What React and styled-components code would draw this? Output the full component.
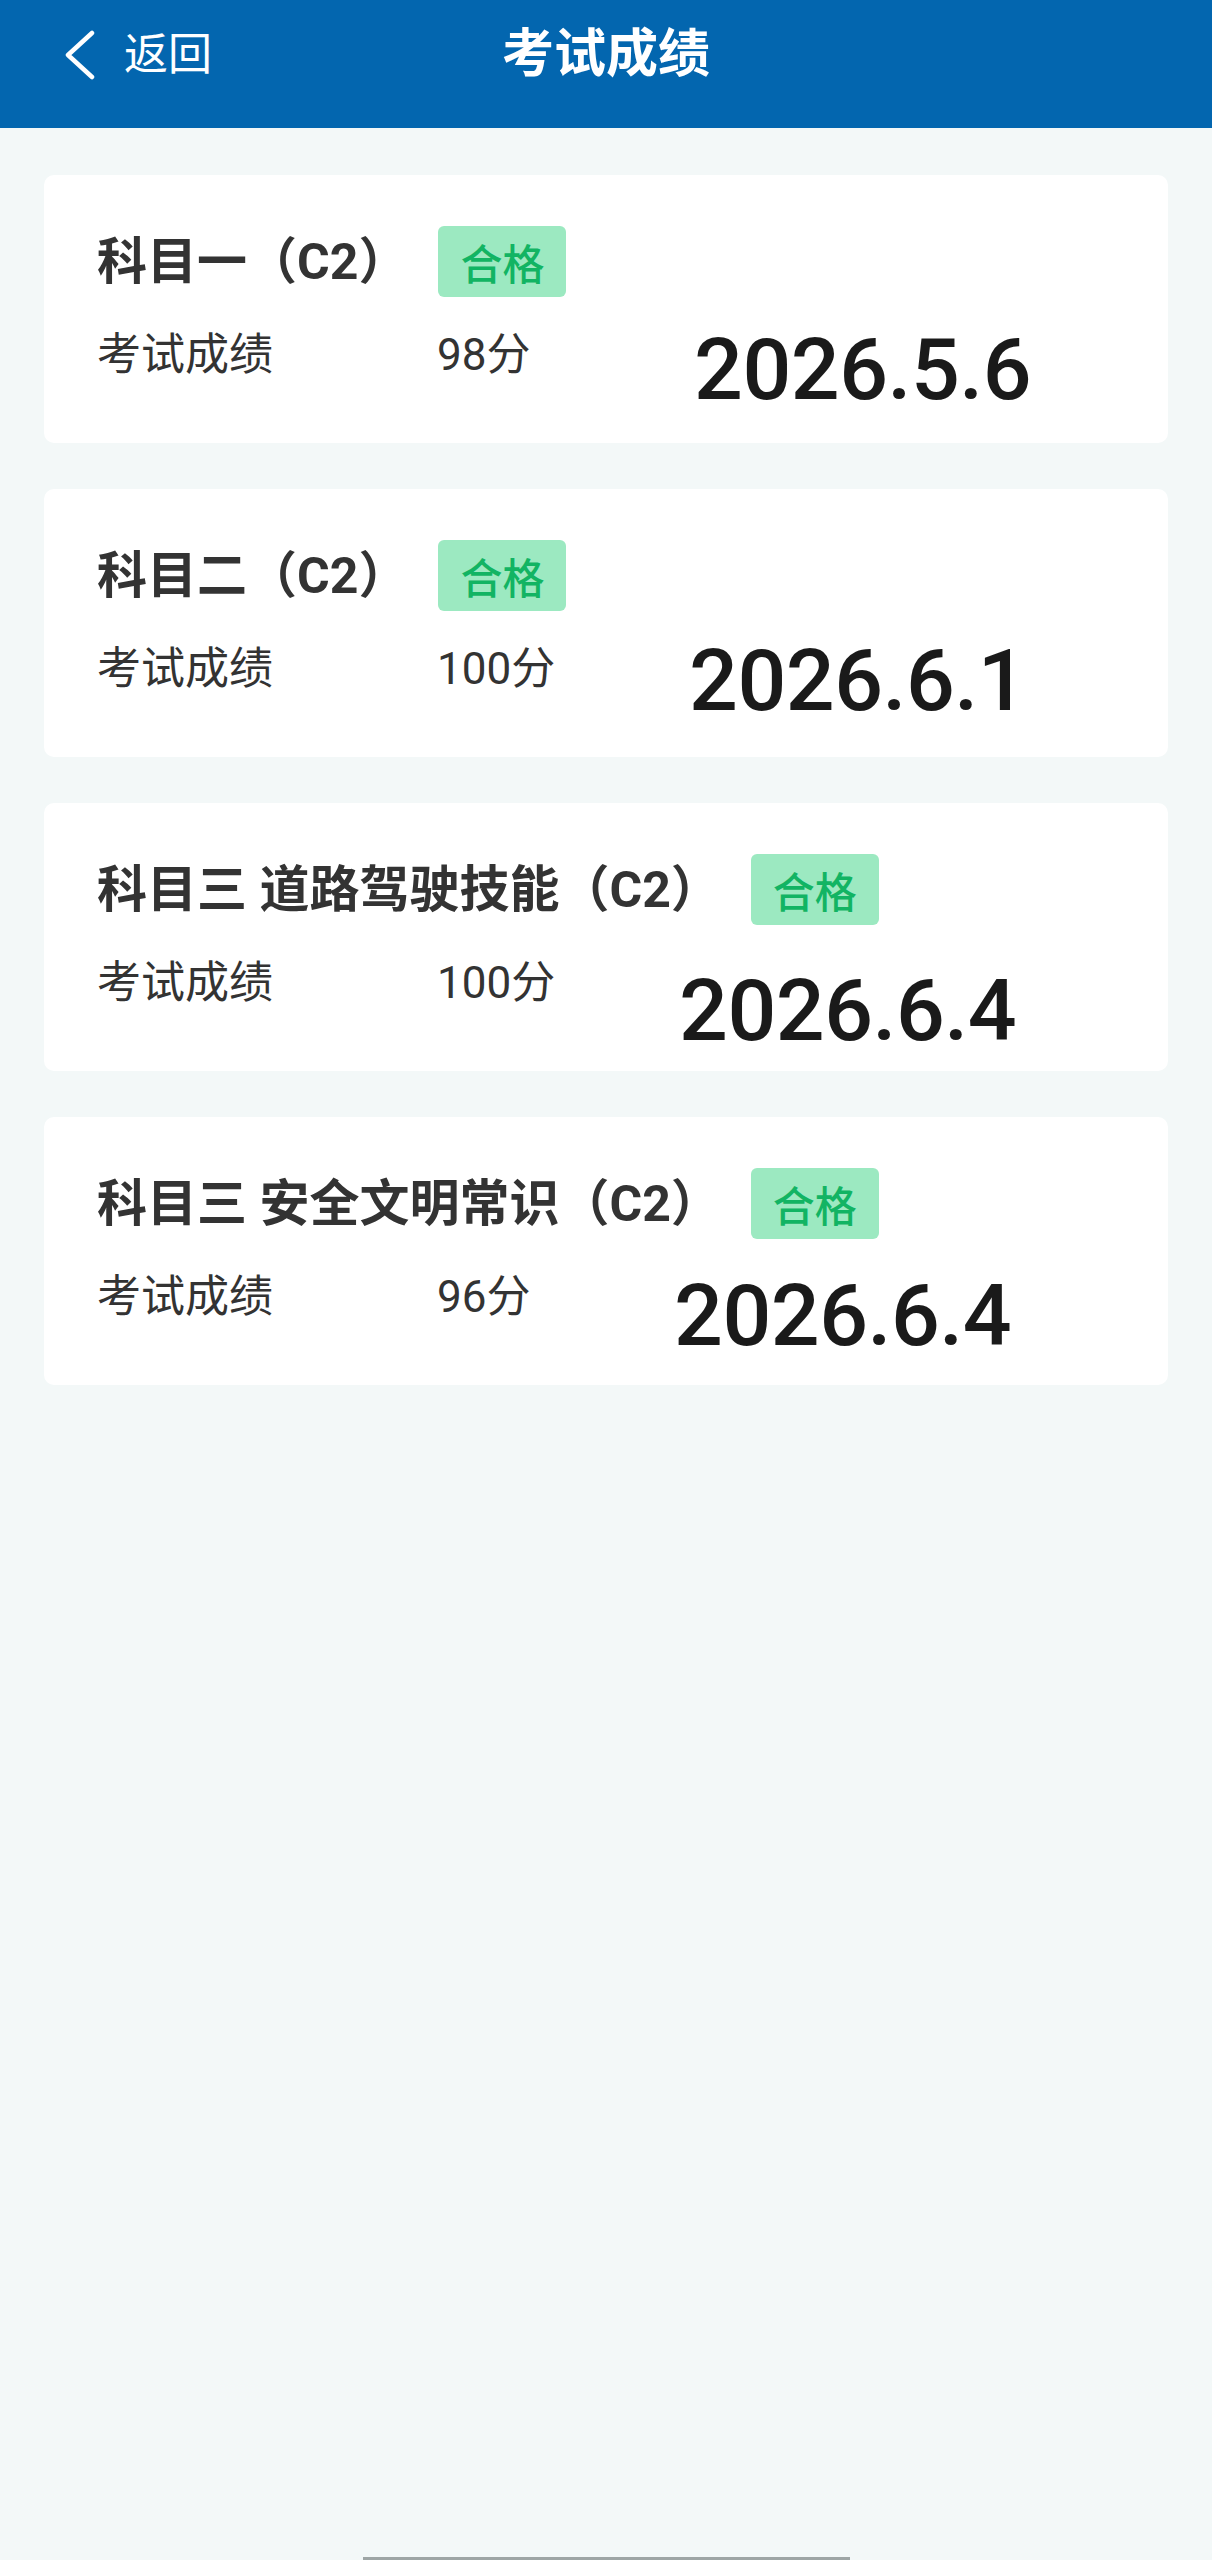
import React from 'react'
import styled, {createGlobalStyle} from "styled-components"

const GlobalStyle = createGlobalStyle`
    body {
        margin: 0;
        background: #f3f8f8;
        font-family: Roboto, "Noto Sans CJK SC", sans-serif;
    }
`
const Page = styled.div`
    display: flex;
    flex-direction: column;
    min-height: 2560px;
`
const Header = styled.div`
    display: grid;
    grid-template-columns: 1fr auto 1fr;
    align-items: center;
    height: 128px;
    padding-bottom: 18px;
    box-sizing: border-box;
    background: #0366af;
    color: #fff;
`
const Back = styled.div`
    display: flex;
    align-items: center;
    padding-left: 65px;
    font-size: 44px;
    line-height: 1;
    svg {
        margin-right: 29px;
    }
`
const Title = styled.div`
    font-size: 52px;
    font-weight: 700;
    line-height: 1;
`
const List = styled.div`
    display: flex;
    flex-direction: column;
    gap: 46px;
    padding: 47px 44px;
    flex: 1;
`
const Card = styled.div`
    height: 268px;
    box-sizing: border-box;
    padding: 51px 53px 0 53px;
    background: #fff;
    border-radius: 10px;
`
const TitleRow = styled.div`
    display: flex;
    align-items: center;
    height: 71px;
`
const Subject = styled.div`
    font-size: 50px;
    font-weight: 700;
    color: #333;
    line-height: 1;
    margin-right: 30px;
`
const Badge = styled.div`
    display: flex;
    align-items: center;
    justify-content: center;
    width: 128px;
    height: 71px;
    border-radius: 6px;
    background: #9ce9c1;
    color: #12b463;
    font-size: 42px;
    font-weight: 500;
`
const InfoRow = styled.div`
    display: flex;
    align-items: flex-start;
    margin-top: 28px;
`
const Label = styled.div`
    width: 340px;
    font-size: 44px;
    line-height: 60px;
    color: #333;
`
const Score = styled.div`
    width: ${props => props.$width}px;
    font-size: 44px;
    line-height: 60px;
    color: #333;
`
const DateText = styled.div`
    margin-top: ${props => props.$dy}px;
    font-size: 86px;
    font-weight: 500;
    line-height: 87px;
    letter-spacing: -0.5px;
    color: #1a1a1a;
`
const HomeBar = styled.div`
    width: 487px;
    height: 3px;
    margin: 0 auto;
    background: #9ea6a6;
`

const results = [
    {subject: "科目一（C2）", score: "98分", date: "2026.5.6", width: 257, dy: 1},
    {subject: "科目二（C2）", score: "100分", date: "2026.6.1", width: 252, dy: -2},
    {subject: "科目三 道路驾驶技能（C2）", score: "100分", date: "2026.6.4", width: 242, dy: 14},
    {subject: "科目三 安全文明常识（C2）", score: "96分", date: "2026.6.4", width: 237, dy: 5},
]

const App = () => {
    return (
        <Page>
            <GlobalStyle />
            <Header>
                <Back>
                    <svg width="30" height="50" viewBox="0 0 30 50">
                        <polyline points="27,3 3,25 27,47" fill="none" stroke="#fff" strokeWidth="4.5" strokeLinecap="round" strokeLinejoin="round" />
                    </svg>
                    返回
                </Back>
                <Title>考试成绩</Title>
                <div />
            </Header>
            <List>
                {results.map(r => (
                    <Card key={r.subject}>
                        <TitleRow>
                            <Subject>{r.subject}</Subject>
                            <Badge>合格</Badge>
                        </TitleRow>
                        <InfoRow>
                            <Label>考试成绩</Label>
                            <Score $width={r.width}>{r.score}</Score>
                            <DateText $dy={r.dy}>{r.date}</DateText>
                        </InfoRow>
                    </Card>
                ))}
            </List>
            <HomeBar />
        </Page>
    )
}

export default App
